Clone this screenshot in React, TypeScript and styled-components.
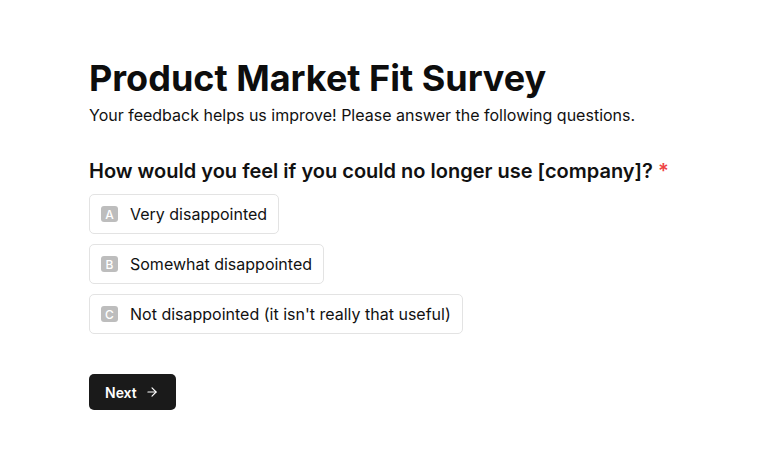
import styled, { createGlobalStyle } from "styled-components";
import { useState } from "react";

const options = [
    { key: "A", label: "Very disappointed" },
    { key: "B", label: "Somewhat disappointed" },
    { key: "C", label: "Not disappointed (it isn't really that useful)" },
];

export default function App() {
    const [picked, setPicked] = useState<string | null>(null);

    return (
        <>
            <GlobalStyle />
            <Page>
                <Title>Product Market Fit Survey</Title>
                <Subtitle>Your feedback helps us improve! Please answer the following questions.</Subtitle>

                <Question>
                    How would you feel if you could no longer use [company]? <Required>*</Required>
                </Question>

                <Options>
                    {options.map(o => (
                        <Option key={o.key} $active={picked === o.key} onClick={() => setPicked(o.key)}>
                            <Badge>{o.key}</Badge>
                            {o.label}
                        </Option>
                    ))}
                </Options>

                <NextButton>
                    Next
                    <svg width="14" height="14" viewBox="0 0 24 24" fill="none" stroke="currentColor" strokeWidth="2" strokeLinecap="round" strokeLinejoin="round">
                        <path d="M5 12h14" />
                        <path d="m12 5 7 7-7 7" />
                    </svg>
                </NextButton>
            </Page>
        </>
    );
}

const GlobalStyle = createGlobalStyle`
    body {
        margin: 0;
        background: #fff;
        font-family: Inter, "Noto Sans", sans-serif;
        color: #111;
    }
`;

const Page = styled.main`
    padding: 56px 89px 0;
    display: flex;
    flex-direction: column;
    align-items: flex-start;
`;

const Title = styled.h1`
    margin: 0;
    font-size: 36px;
    font-weight: 700;
    line-height: 44px;
    color: #0d0d0d;
`;

const Subtitle = styled.p`
    margin: 3px 0 0;
    font-size: 16px;
    line-height: 24px;
    color: #111;
`;

const Question = styled.h2`
    margin: 30px 0 0;
    font-size: 20px;
    font-weight: 600;
    line-height: 28px;
    color: #111;
`;

const Required = styled.span`
    color: #ef4444;
`;

const Options = styled.div`
    margin-top: 9px;
    display: flex;
    flex-direction: column;
    align-items: flex-start;
    gap: 10px;
`;

const Option = styled.button<{ $active: boolean }>`
    display: flex;
    align-items: center;
    gap: 12px;
    height: 40px;
    padding: 0 11px;
    border: 1px solid ${p => (p.$active ? "#111" : "#e3e3e3")};
    border-radius: 5px;
    background: #fff;
    font-family: inherit;
    font-size: 16px;
    color: #111;
    cursor: pointer;
`;

const Badge = styled.span`
    display: inline-flex;
    align-items: center;
    justify-content: center;
    width: 17px;
    height: 16px;
    border-radius: 3px;
    background: #bdbdbd;
    color: #fff;
    font-size: 12px;
    font-weight: 500;
`;

const NextButton = styled.button`
    margin-top: 40px;
    display: inline-flex;
    align-items: center;
    gap: 8px;
    height: 36px;
    width: 87px;
    padding: 0 16px;
    border: none;
    border-radius: 5px;
    background: #1a1a1a;
    color: #fff;
    font-family: inherit;
    font-size: 14px;
    font-weight: 600;
    cursor: pointer;
`;
